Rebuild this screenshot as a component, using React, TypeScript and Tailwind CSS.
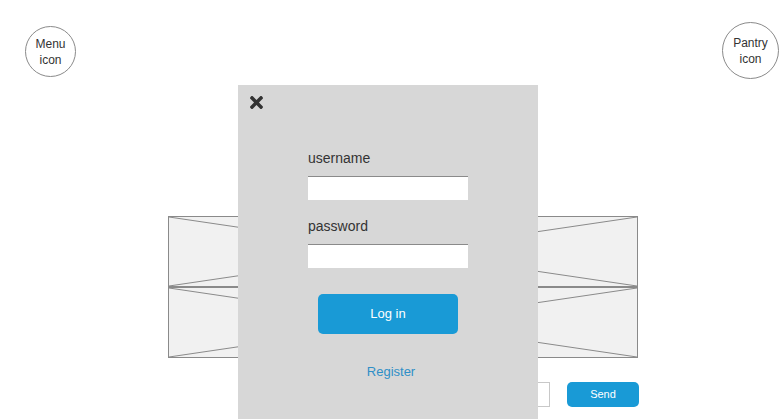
import React from "react";

function Circle({ size, mt, lines }: { size: number; mt: string; lines: string[] }) {
  return (
    <div
      className={`${mt} flex flex-col items-center justify-center rounded-full border border-[#8a8a8a] bg-white text-[12px] leading-[16px] text-[#333]`}
      style={{ width: size, height: size }}
    >
      {lines.map((l) => (
        <span key={l}>{l}</span>
      ))}
    </div>
  );
}

function Placeholder() {
  return (
    <div className="relative h-[71px] border border-[#8a8a8a] bg-[#f1f1f1]">
      <svg className="absolute inset-0 block h-full w-full" preserveAspectRatio="none" viewBox="0 0 100 100">
        <line x1="0" y1="0" x2="100" y2="100" stroke="#8a8a8a" strokeWidth="1" vectorEffect="non-scaling-stroke" />
        <line x1="0" y1="100" x2="100" y2="0" stroke="#8a8a8a" strokeWidth="1" vectorEffect="non-scaling-stroke" />
      </svg>
    </div>
  );
}

export default function App() {
  return (
    <div className="relative h-[419px] w-[780px] overflow-hidden bg-white font-['Liberation_Sans',Arial,sans-serif]">
      <div className="flex items-start justify-between pl-[25px] pr-[1px]">
        <Circle size={51} mt="mt-[26px]" lines={["Menu", "icon"]} />
        <Circle size={57} mt="mt-[22px]" lines={["Pantry", "icon"]} />
      </div>

      <div className="ml-[168px] mt-[137px] flex w-[470px] flex-col">
        <Placeholder />
        <Placeholder />
      </div>

      <div className="ml-[300px] mt-[24px] flex items-start gap-[17px]">
        <div className="h-[25px] w-[250px] border border-[#c8c8c8] bg-white" />
        <button className="h-[25px] w-[72px] rounded-[5px] bg-[#199ad6] text-[11px] leading-[25px] text-white">
          Send
        </button>
      </div>

      <div className="absolute left-[238px] top-[85px] h-[334px] w-[300px] bg-[#d7d7d7] pl-[12px] pt-[11px]">
        <svg className="block" width="13" height="13" viewBox="0 80 352 352">
          <path
            fill="#333"
            d="M242.72 256l100.07-100.07c12.28-12.28 12.28-32.19 0-44.48l-22.24-22.24c-12.28-12.28-32.19-12.28-44.48 0L176 189.28 75.930 89.21c-12.28-12.28-32.19-12.28-44.48 0L9.21 111.45c-12.28 12.28-12.28 32.19 0 44.48L109.28 256 9.21 356.07c-12.28 12.28-12.28 32.19 0 44.48l22.24 22.24c12.28 12.28 32.2 12.28 44.48 0L176 322.72l100.07 100.07c12.28 12.28 32.2 12.28 44.48 0l22.24-22.24c12.28-12.28 12.28-32.19 0-44.48L242.72 256z"
          />
        </svg>
        <div className="ml-[58px] mt-[41px] flex w-[160px] flex-col">
          <div className="text-[14px] leading-[16px] text-[#333]">username</div>
          <div className="mt-[10px] h-[24px] border-t border-[#8a8a8a] bg-white" />
          <div className="mt-[18px] text-[14px] leading-[16px] text-[#333]">password</div>
          <div className="mt-[10px] h-[24px] border-t border-[#8a8a8a] bg-white" />
          <button className="mx-[10px] mt-[26px] h-[40px] w-[140px] rounded-[5px] bg-[#199ad6] text-[13px] text-white">
            Log in
          </button>
          <div className="ml-[6px] mt-[30px] text-center text-[13px] leading-[16px] text-[#2f8fc7]">Register</div>
        </div>
      </div>
    </div>
  );
}
